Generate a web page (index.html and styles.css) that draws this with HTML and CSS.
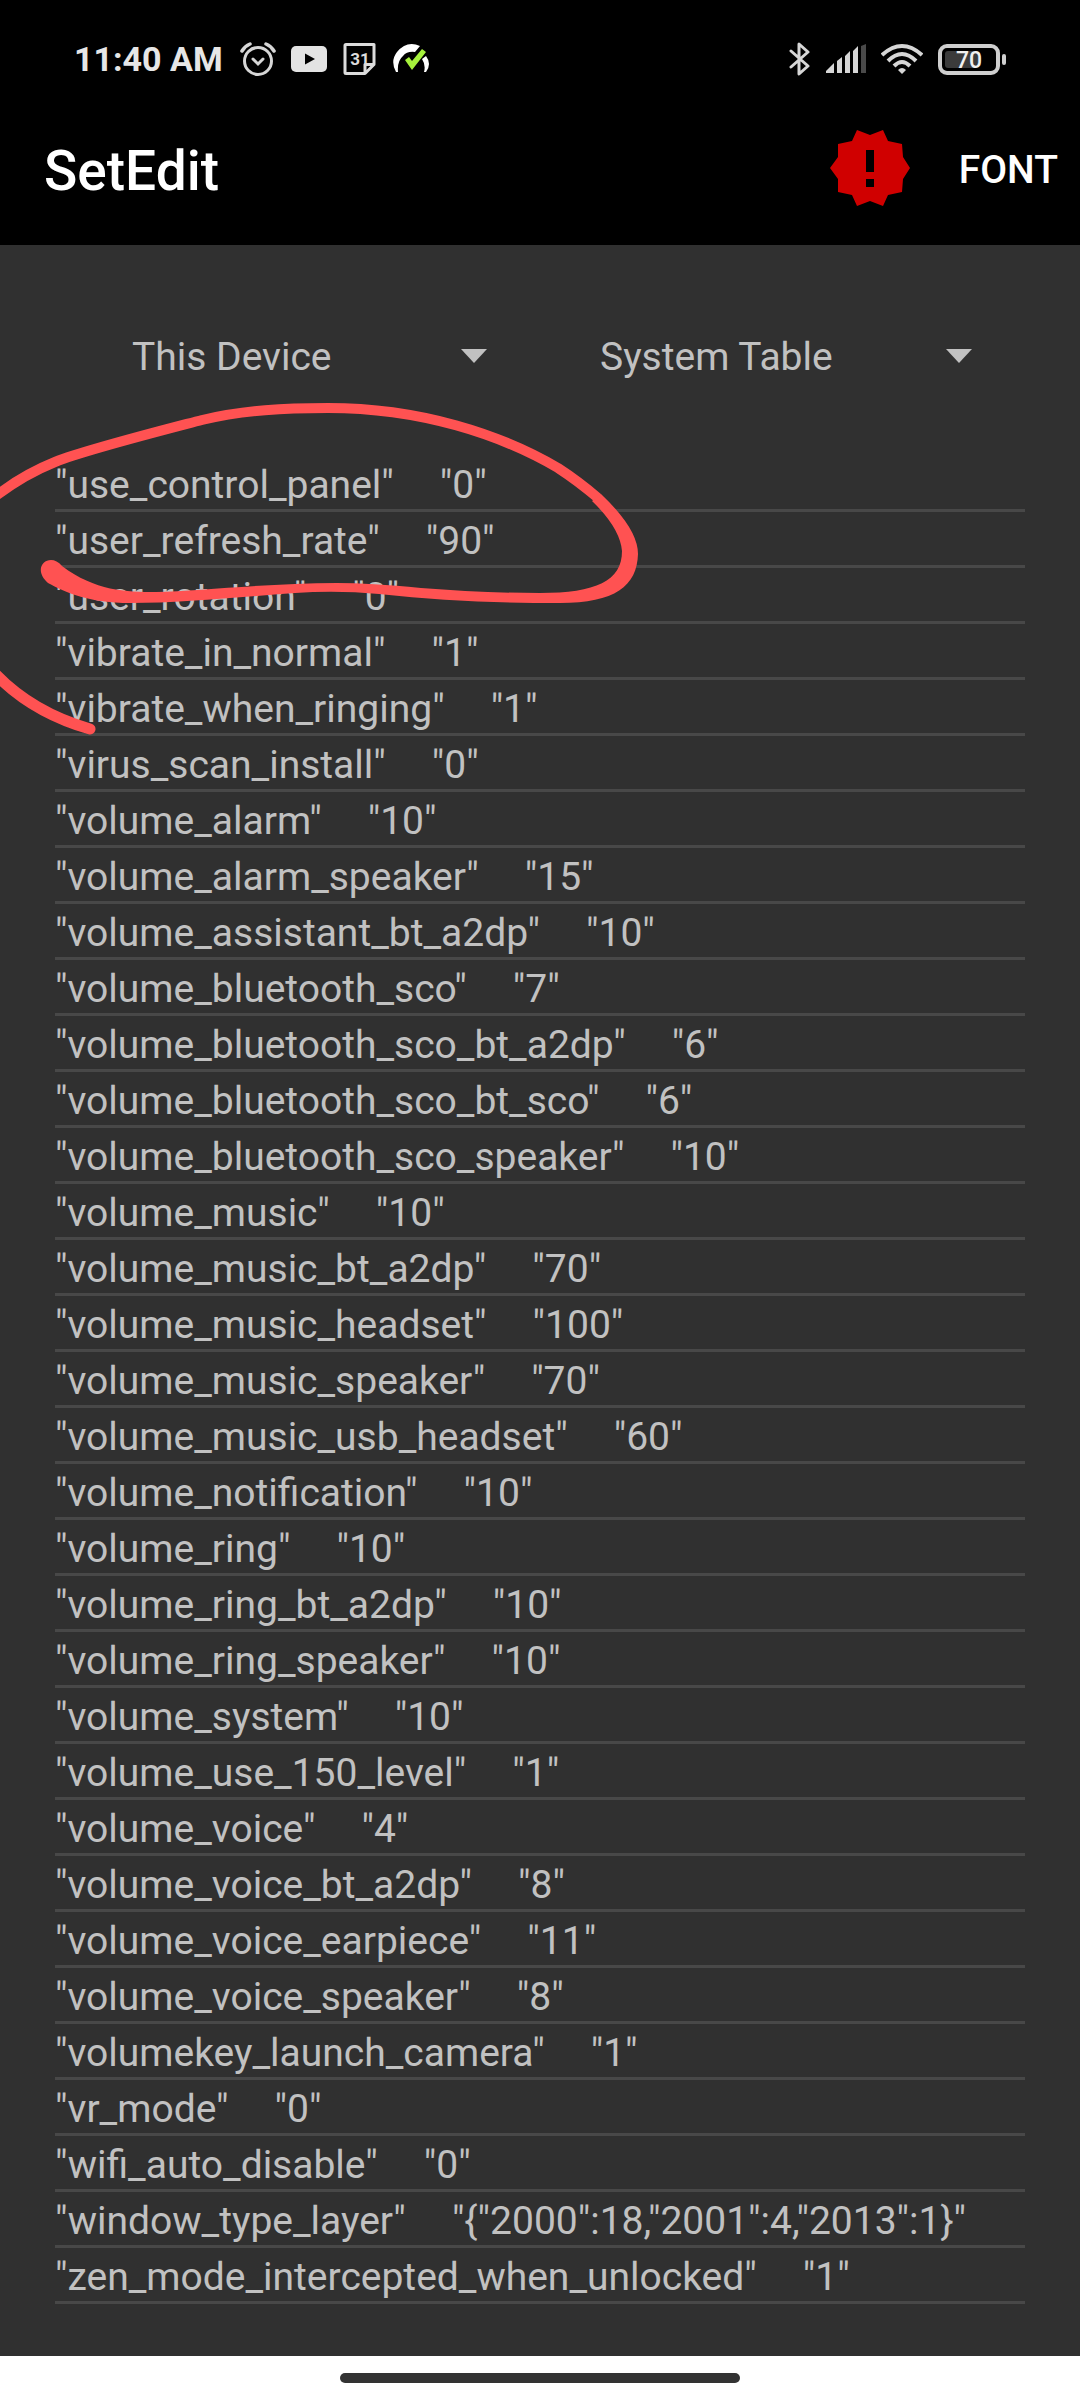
FILE: index.html
```html
<!doctype html>
<html lang="en">
	<head>
		<meta charset="UTF-8" />
		<meta name="viewport" content="width=device-width, initial-scale=1.0" />
		<title>SetEdit</title>
		<link rel="stylesheet" href="styles.css">
	</head>
	<body>
		<div class="status-bar">
			<div class="status-left">
				<span class="clock">11:40 AM</span>
				<svg class="icon" width="36" height="36" viewBox="0 0 36 36" fill="none" stroke="#d6d6d6" stroke-width="3" stroke-linecap="round">
					<circle cx="18" cy="20" r="13.5" />
					<path d="M13 18l5 5 5-5" />
					<path d="M2 10q3-5 8-7M34 10q-3-5-8-7" stroke-width="3.5" />
				</svg>
				<svg class="icon" width="36" height="36" viewBox="0 0 36 36">
					<rect x="0" y="5" width="36" height="26" rx="5" fill="#e3e3e3" />
					<path d="M14 12.500v11l10-5.500z" fill="#000" />
				</svg>
				<svg class="icon" width="36" height="36" viewBox="0 0 36 36">
					<path d="M4 3.500h28v20l-9 9H4q-1 0-1-1v-27q0-1 1-1zM32 23.500h-9v9" fill="none" stroke="#dcdcdc" stroke-width="3" stroke-linejoin="round" />
					<text class="icon-day" x="18" y="24" text-anchor="middle">31</text>
				</svg>
				<svg class="icon" width="36" height="36" viewBox="0 0 36 36">
					<path d="M3 31Q-3 20 4 11Q14-1 27 5L22 11Q14 10 10 15Q4 20 5 31z" fill="#fff" />
					<path d="M33 15Q39 23 33 31H31Q33 24 29 18z" fill="#fff" />
					<path d="M12 19l4-3 3 4L29 8l4 3-14 18z" fill="#a6f23c" />
				</svg>
			</div>
			<div class="status-right">
				<svg class="icon" width="22" height="36" viewBox="0 0 22 36" fill="none" stroke="#d6d6d6" stroke-width="3" stroke-linecap="round" stroke-linejoin="round">
					<path d="M2 10l17 15-9 8V3l9 8L2 26" />
				</svg>
				<svg class="icon" width="40" height="36" viewBox="0 0 40 36" fill="#d6d6d6">
					<path d="M0 30l8-8v10H0zM11 20l5-4v16h-5zM19 15l5-5v22h-5zM27 10l5-5v27h-5z" />
					<path d="M35 5l5-2v29h-5z" fill="#4a4a4a" />
				</svg>
				<svg class="icon" width="42" height="36" viewBox="0 0 42 36" fill="none" stroke="#d6d6d6" stroke-width="4">
					<path d="M1 14Q21-4 41 14M7 20Q21 6 35 20M13 25Q21 17 29 25" />
					<path d="M17 29q4-4 8 0l-4 4z" fill="#d6d6d6" stroke="none" />
				</svg>
				<svg class="icon" width="68" height="36" viewBox="0 0 68 36">
					<rect x="2" y="5" width="58" height="27" rx="7" fill="none" stroke="#cfcfcf" stroke-width="4" />
					<rect x="7" y="10" width="33" height="17" rx="3" fill="#3b3b3b" />
					<rect x="64" y="13" width="4" height="11" rx="2" fill="#cfcfcf" />
					<text class="icon-level" x="31" y="27" text-anchor="middle">70</text>
				</svg>
			</div>
		</div>

		<header class="app-bar">
			<h1>SetEdit</h1>
			<button class="alert-button" aria-label="Warning">
				<svg width="80" height="80" viewBox="-40 -40 80 80">
					<path d="M40 0L33 11 32 24 18 27 13 38 0 33-13 38-18 27-32 24-32 11-40 0-32-11-32-24-18-27-13-38 0-33 13-38 18-27 32-24 33-11z" fill="#d00000" />
					<path d="M-4-18h8V4h-8zM-4 11h8v8h-8z" fill="#000" />
				</svg>
			</button>
			<button class="font-button">FONT</button>
		</header>

		<main>
			<div class="spinners">
				<div class="spinner spinner-device">
					<select aria-label="Device">
						<option>This Device</option>
					</select>
				</div>
				<div class="spinner spinner-table">
					<select aria-label="Table">
						<option>System Table</option>
					</select>
				</div>
			</div>

			<ul class="settings">
				<li><span>"use_control_panel"</span><span>"0"</span></li>
				<li><span>"user_refresh_rate"</span><span>"90"</span></li>
				<li><span>"user_rotation"</span><span>"0"</span></li>
				<li><span>"vibrate_in_normal"</span><span>"1"</span></li>
				<li><span>"vibrate_when_ringing"</span><span>"1"</span></li>
				<li><span>"virus_scan_install"</span><span>"0"</span></li>
				<li><span>"volume_alarm"</span><span>"10"</span></li>
				<li><span>"volume_alarm_speaker"</span><span>"15"</span></li>
				<li><span>"volume_assistant_bt_a2dp"</span><span>"10"</span></li>
				<li><span>"volume_bluetooth_sco"</span><span>"7"</span></li>
				<li><span>"volume_bluetooth_sco_bt_a2dp"</span><span>"6"</span></li>
				<li><span>"volume_bluetooth_sco_bt_sco"</span><span>"6"</span></li>
				<li><span>"volume_bluetooth_sco_speaker"</span><span>"10"</span></li>
				<li><span>"volume_music"</span><span>"10"</span></li>
				<li><span>"volume_music_bt_a2dp"</span><span>"70"</span></li>
				<li><span>"volume_music_headset"</span><span>"100"</span></li>
				<li><span>"volume_music_speaker"</span><span>"70"</span></li>
				<li><span>"volume_music_usb_headset"</span><span>"60"</span></li>
				<li><span>"volume_notification"</span><span>"10"</span></li>
				<li><span>"volume_ring"</span><span>"10"</span></li>
				<li><span>"volume_ring_bt_a2dp"</span><span>"10"</span></li>
				<li><span>"volume_ring_speaker"</span><span>"10"</span></li>
				<li><span>"volume_system"</span><span>"10"</span></li>
				<li><span>"volume_use_150_level"</span><span>"1"</span></li>
				<li><span>"volume_voice"</span><span>"4"</span></li>
				<li><span>"volume_voice_bt_a2dp"</span><span>"8"</span></li>
				<li><span>"volume_voice_earpiece"</span><span>"11"</span></li>
				<li><span>"volume_voice_speaker"</span><span>"8"</span></li>
				<li><span>"volumekey_launch_camera"</span><span>"1"</span></li>
				<li><span>"vr_mode"</span><span>"0"</span></li>
				<li><span>"wifi_auto_disable"</span><span>"0"</span></li>
				<li><span>"window_type_layer"</span><span>"{"2000":18,"2001":4,"2013":1}"</span></li>
				<li><span>"zen_mode_intercepted_when_unlocked"</span><span>"1"</span></li>
			</ul>

			<!-- Hand-drawn circle around the refresh rate -->
			<svg class="scribble" width="650" height="350" viewBox="0 0 650 350">
				<path d="M-20 108Q15 77 55 61C85 49 160 30 202 19C245 9 285 7 328 7C420 7 500 33 558 67Q578 80 598 97" fill="none" stroke="#ff5252" stroke-width="10" />
				<path d="M601 93Q638 128 638 153C637 185 615 202 560 202C500 202 440 200 379 193Q337 189 295 192C240 196 180 202 130 202C90 202 66 192 48 182C30 166 50 150 62 165C95 190 126 191 156 191C200 190 270 182 337 182Q370 182 421 187C460 190 500 192 540 192C596 192 622 180 622 150Q620 127 592 100z" fill="#ff5252" />
				<path d="M-30 240Q10 305 90 328" fill="none" stroke="#ff5252" stroke-width="11" stroke-linecap="round" />
			</svg>
		</main>

		<div class="nav-bar">
			<div class="nav-handle"></div>
		</div>
	</body>
</html>
```

FILE: styles.css
```css
* {
	box-sizing: border-box;
}
body {
	margin: 0;
	min-height: 100vh;
	display: flex;
	flex-direction: column;
	background-color: #303030;
	color: #c1c1c1;
	font-family: Roboto, sans-serif;
	font-size: 39px;
	line-height: 46px;
}
.status-bar {
	display: flex;
	justify-content: space-between;
	align-items: center;
	height: 95px;
	padding: 22px 74px 0;
	background-color: #000;
}
.status-left,
.status-right {
	display: flex;
	align-items: center;
	gap: 15px;
}
.clock {
	margin-right: 2px;
	color: #e6e6e6;
	font-size: 34px;
	font-weight: 700;
}
.icon {
	display: block;
}
.icon-day {
	fill: #dcdcdc;
	font-size: 17px;
	font-weight: 700;
}
.icon-level {
	fill: #f0f0f0;
	font-size: 23px;
	font-weight: 500;
}
.app-bar {
	display: flex;
	align-items: center;
	height: 150px;
	padding: 0 22px 0 44px;
	background-color: #000;
	color: #fff;
}
.app-bar h1 {
	flex: 1;
	margin: 0;
	padding-top: 2px;
	font-size: 55px;
	font-weight: 500;
	line-height: 64px;
}
.app-bar button {
	padding: 0;
	border: none;
	background: none;
	color: inherit;
	font: inherit;
	font-weight: 500;
	cursor: pointer;
}
.app-bar .alert-button {
	margin-right: 49px;
	padding-bottom: 4px;
}
.alert-button svg {
	display: block;
}
main {
	position: relative;
	flex: 1;
	padding: 79px 55px 52px;
}
.spinners {
	display: flex;
	gap: 93px;
	margin-bottom: 66px;
	padding: 0 33px 0 77px;
}
.spinner {
	position: relative;
}
.spinner-device {
	flex: 22 1 0;
}
.spinner-table {
	flex: 23 1 0;
}
.spinner::after {
	content: "";
	position: absolute;
	top: 25px;
	right: 20px;
	border: 13px solid transparent;
	border-top: 14px solid #c1c1c1;
	border-bottom: 0;
	pointer-events: none;
}
.spinner select {
	appearance: none;
	width: 100%;
	height: 66px;
	padding: 0;
	border: none;
	background: none;
	color: inherit;
	font: inherit;
}
.settings {
	margin: 0;
	padding: 0;
	list-style: none;
}
.settings li {
	display: flex;
	gap: 46px;
	padding: 6px 0 1px;
	border-bottom: 3px solid #484848;
	white-space: nowrap;
}
.scribble {
	position: absolute;
	top: 156px;
	left: 0;
	pointer-events: none;
}
.nav-bar {
	display: flex;
	justify-content: center;
	align-items: center;
	height: 44px;
	background-color: #fff;
}
.nav-handle {
	width: 37%;
	height: 10px;
	border-radius: 5px;
	background-color: #333;
}
```
